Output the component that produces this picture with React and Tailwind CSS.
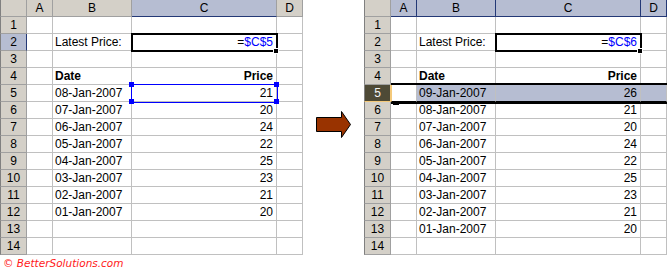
import React from 'react';

const COLS = ['A', 'B', 'C', 'D'];
const WIDTHS = ['w-[26px]', 'w-[79px]', 'w-[145px]', 'w-[26px]'];

const leftRows = [
  {},
  { B: 'Latest Price:', C: '$C$5' },
  {},
  { B: 'Date', C: 'Price', bold: true },
  { B: '08-Jan-2007', C: '21' },
  { B: '07-Jan-2007', C: '20' },
  { B: '06-Jan-2007', C: '24' },
  { B: '05-Jan-2007', C: '22' },
  { B: '04-Jan-2007', C: '25' },
  { B: '03-Jan-2007', C: '23' },
  { B: '02-Jan-2007', C: '21' },
  { B: '01-Jan-2007', C: '20' },
  {},
  {},
];

const rightRows = [
  {},
  { B: 'Latest Price:', C: '$C$6' },
  {},
  { B: 'Date', C: 'Price', bold: true },
  { B: '09-Jan-2007', C: '26' },
  { B: '08-Jan-2007', C: '21' },
  { B: '07-Jan-2007', C: '20' },
  { B: '06-Jan-2007', C: '24' },
  { B: '05-Jan-2007', C: '22' },
  { B: '04-Jan-2007', C: '25' },
  { B: '03-Jan-2007', C: '23' },
  { B: '02-Jan-2007', C: '21' },
  { B: '01-Jan-2007', C: '20' },
  {},
];

// blue square handle on the referenced cell
const Handle = ({ pos }) => (
  <span className={`absolute w-[5px] h-[5px] bg-[#0000ff] ${pos}`} />
);

const Cell = ({ width, right, bold, bg = 'bg-white', extra = '', children }) => (
  <div
    className={`${width} h-[17px] flex items-center whitespace-nowrap border-r border-b border-[#c0c0c0] ${bg} ${
      right ? 'justify-end pr-[3px]' : 'pl-[2px]'
    } ${bold ? 'font-bold' : ''} ${extra}`}
  >
    {children}
  </div>
);

const Sheet = ({ rows, variant }) => {
  const isRight = variant === 'right';

  const renderCell = (r, n, c, i) => {
    const v = r[c];
    const width = WIDTHS[i];
    const isFormula = n === 2 && c === 'C';

    if (isFormula) {
      return (
        <Cell key={c} width={width} right extra="relative z-10 outline-2 outline-black -outline-offset-1">
          <span>
            =<span className="text-[#0000ff]">{v}</span>
          </span>
          <span className="absolute right-[-3px] bottom-[-4px] w-[6px] h-[6px] bg-black border border-white" />
        </Cell>
      );
    }

    if (!isRight && n === 5 && c === 'C') {
      return (
        <Cell key={c} width={width} right extra="relative z-10 outline outline-[#0000ff]">
          {v}
          <Handle pos="-left-[3px] -top-[3px]" />
          <Handle pos="-right-[3px] -top-[3px]" />
          <Handle pos="-left-[3px] -bottom-[3px]" />
          <Handle pos="-right-[3px] -bottom-[3px]" />
        </Cell>
      );
    }

    if (isRight && n === 5) {
      // inserted row: thick black lines above and below
      return (
        <Cell
          key={c}
          width={width}
          right={c === 'C'}
          bg={c === 'A' ? 'bg-white' : 'bg-[#b6bdd2]'}
          extra={`relative z-10 border-b-black shadow-[0_-2px_0_#000,0_2px_0_#000] ${
            c === 'A' ? 'border-l border-l-[#f4c97a]' : ''
          } ${c === 'D' ? 'w-[26px]' : ''}`}
        >
          {v}
          {c === 'A' && (
            <span className="absolute left-[1px] bottom-[-4px] w-[6px] h-[4px] bg-black" />
          )}
        </Cell>
      );
    }

    return (
      <Cell key={c} width={width} right={c === 'C'} bold={r.bold}>
        {v}
      </Cell>
    );
  };

  return (
    <div className="flex flex-col w-[303px]">
      {/* column header row */}
      <div className="flex h-[17px]">
        <div className="w-[27px] h-[17px] bg-[#d4d0c8] border-l border-l-[#808080] border-r border-b border-[#a0a0a0]" />
        {COLS.map((c, i) => {
          let cls = 'bg-[#d4d0c8] border-[#a0a0a0]';
          if (isRight) cls = 'bg-[#b6bdd2] border-[#233876]';
          else if (c === 'C') cls = 'bg-[#b6bdd2] border-r-[#a0a0a0] border-b-[#233876]';
          return (
            <div
              key={c}
              className={`${WIDTHS[i]} h-[17px] flex items-center justify-center border-r border-b ${cls}`}
            >
              {c}
            </div>
          );
        })}
      </div>

      {rows.map((r, idx) => {
        const n = idx + 1;
        let headCls = 'bg-[#d4d0c8] border-[#a0a0a0]';
        if (!isRight && n === 2) headCls = 'bg-[#b6bdd2] border-r-[#233876] border-b-[#a0a0a0]';
        if (isRight && n === 5)
          headCls = 'bg-[#4e4a36] text-[#f4f4f4] border-r-[#f4c97a] border-b-[#f4c97a]';
        return (
          <div key={n} className="flex h-[17px]">
            <div
              className={`w-[27px] h-[17px] flex items-center justify-center border-l border-l-[#808080] border-r border-b ${headCls}`}
            >
              {n}
            </div>
            {COLS.map((c, i) => renderCell(r, n, c, i))}
          </div>
        );
      })}
    </div>
  );
};

const Arrow = () => (
  <svg width="36" height="28" viewBox="0 0 36 28" className="block">
    <path
      d="M0.5 6.5 H25.5 V0.5 L34.5 13.5 L25.5 26.5 V20.5 H0.5 Z"
      fill="#993300"
      stroke="#000"
      strokeWidth="1"
    />
  </svg>
);

export default function App() {
  return (
    <div className="w-[667px] h-[271px] bg-white overflow-hidden text-[12px] leading-[16px] text-black font-['Liberation_Sans',Arial,sans-serif]">
      <div className="flex items-start">
        <div className="flex flex-col">
          <Sheet rows={leftRows} variant="left" />
          <div className="pl-[3px] pt-[2px] text-[10.5px] leading-[12px] italic text-[#ff1a1a] font-['DejaVu_Sans',Verdana,sans-serif]">
            © BetterSolutions.com
          </div>
        </div>
        <div className="w-[61px] flex justify-center pt-[111px] pl-[1px]">
          <Arrow />
        </div>
        <Sheet rows={rightRows} variant="right" />
      </div>
    </div>
  );
}
